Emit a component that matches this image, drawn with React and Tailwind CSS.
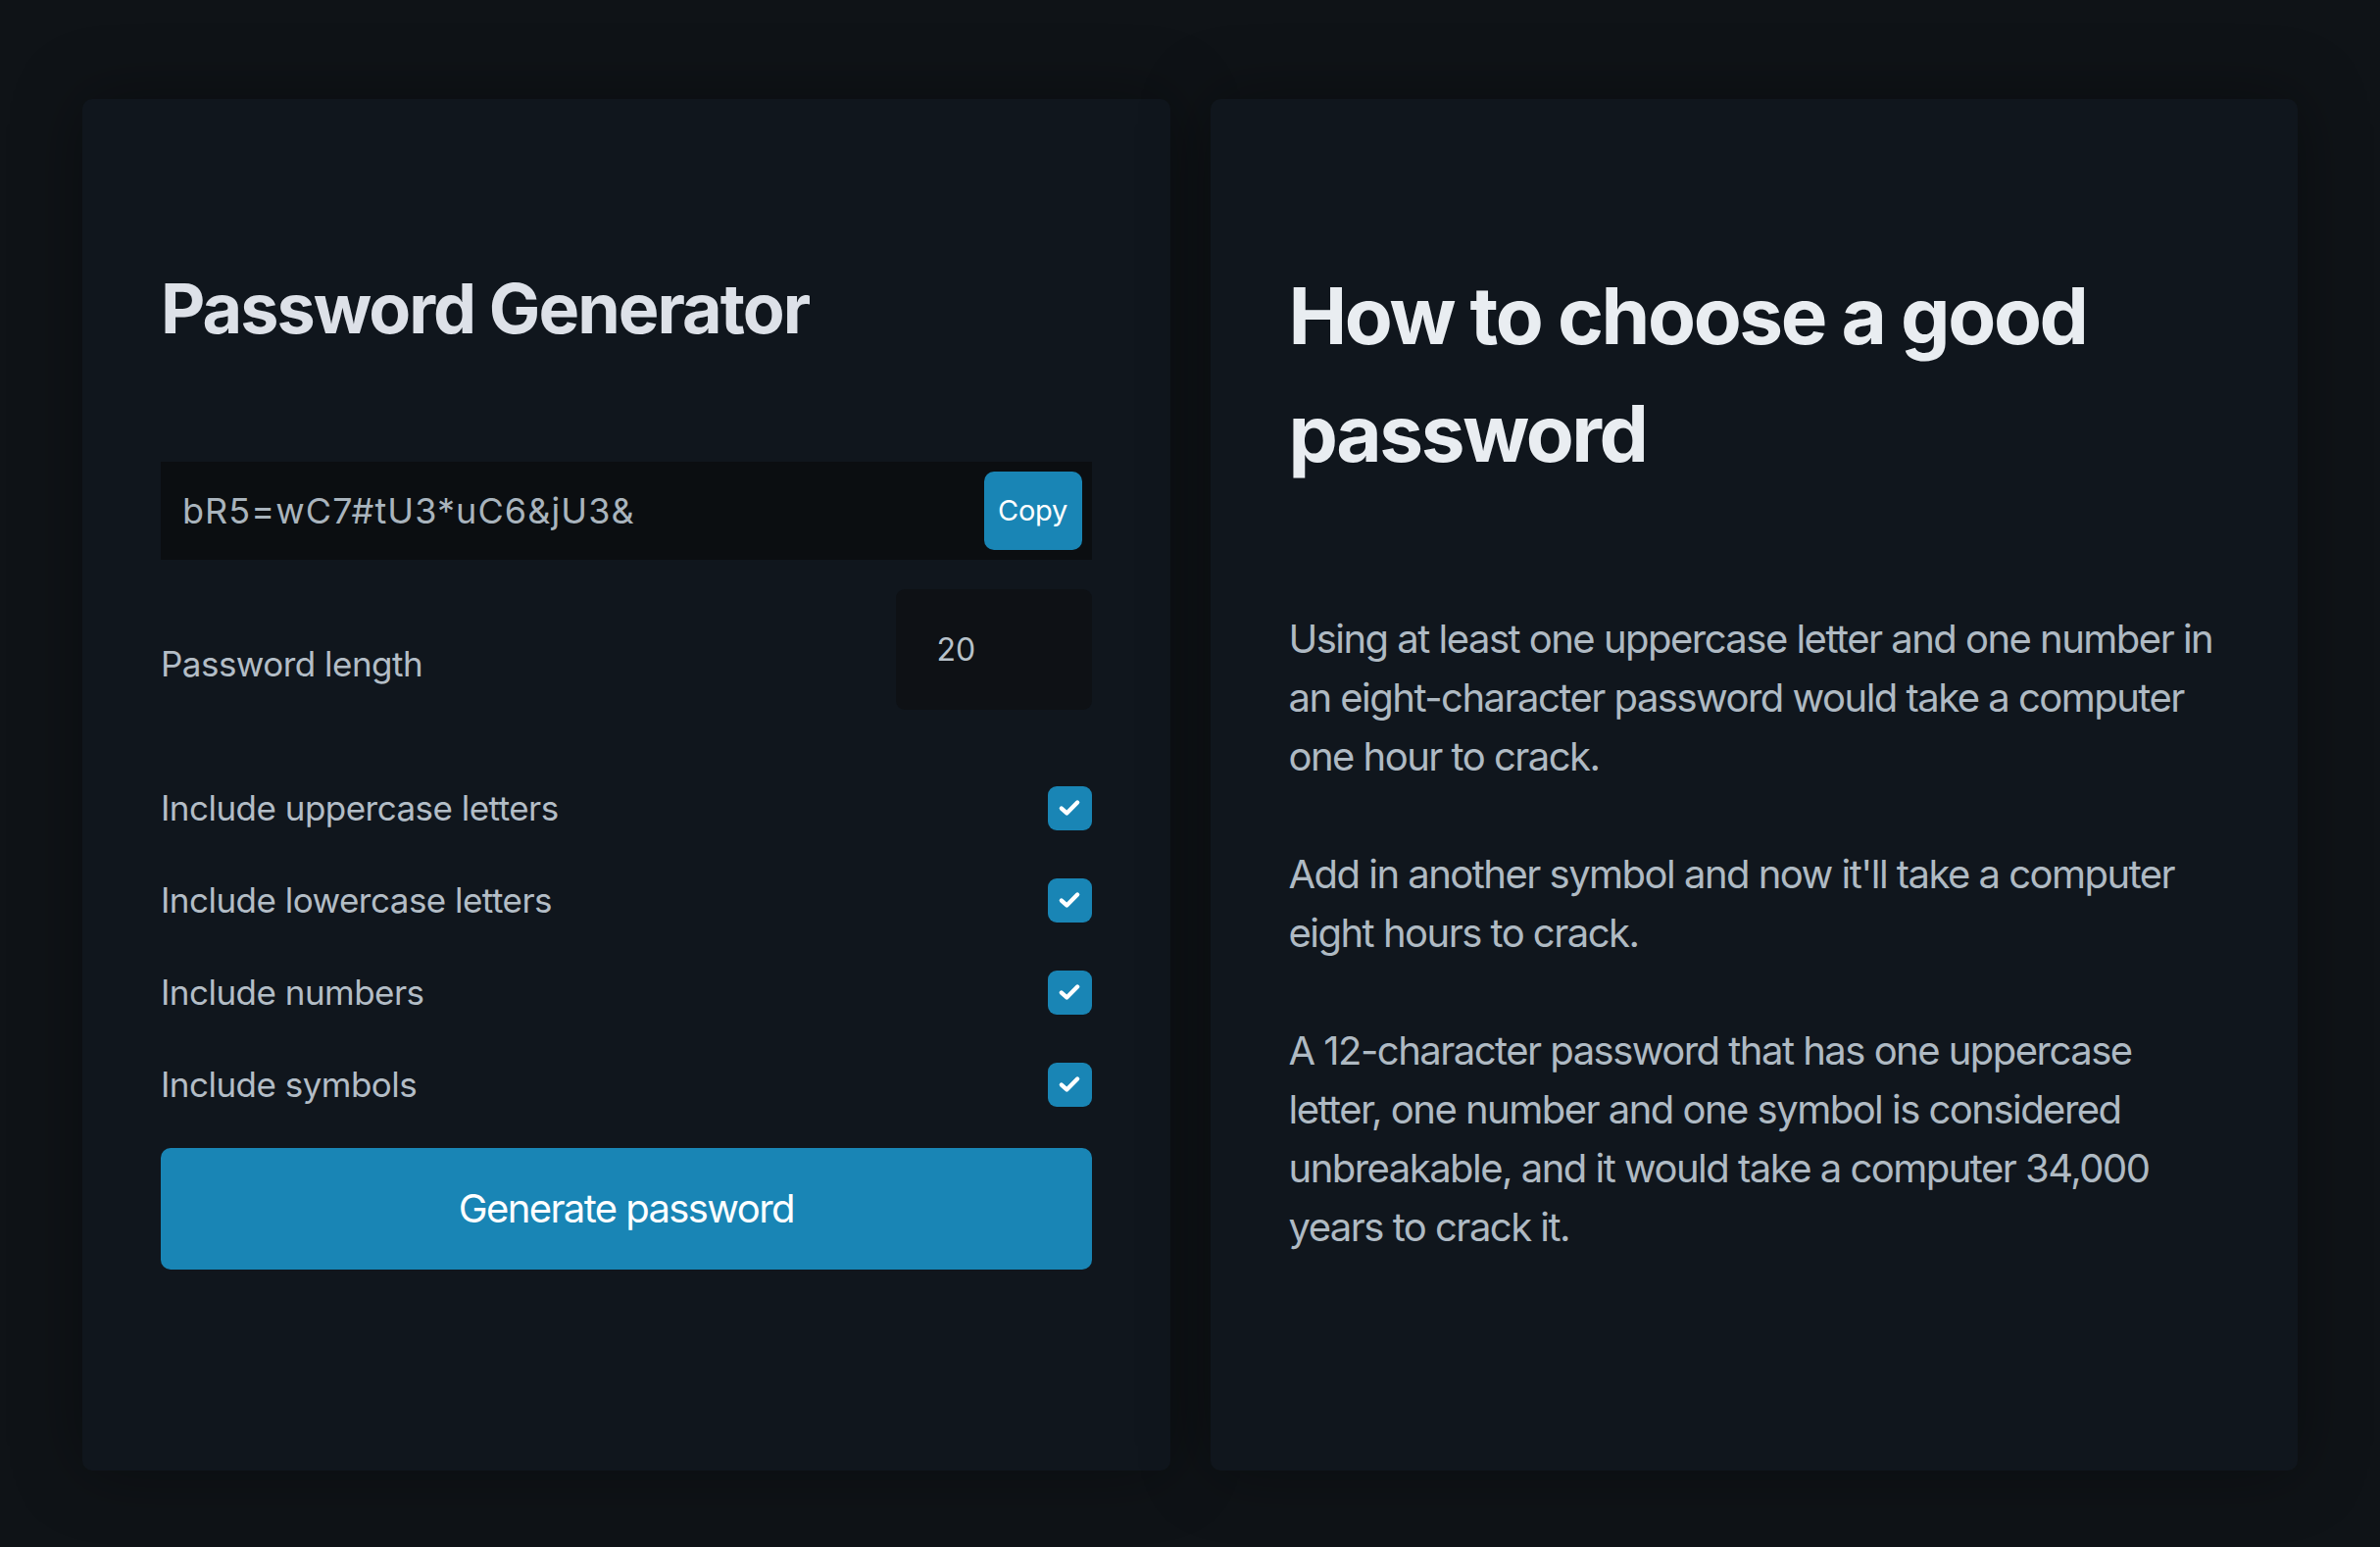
import { useState } from "react";

const font = { fontFamily: "Inter, 'Noto Sans', sans-serif" };

function CheckRow({ label, checked, onToggle }) {
  return (
    <div className="flex h-[94px] items-center justify-between">
      <span className="text-[35px] tracking-[-0.015em] text-[#b3bdc6]">{label}</span>
      <button
        type="button"
        onClick={onToggle}
        className={
          checked
            ? "flex h-[45px] w-[45px] items-center justify-center rounded-[9px] bg-[#1985b5]"
            : "flex h-[45px] w-[45px] items-center justify-center rounded-[9px] border-2 border-[#2c3a45] bg-[#0e1115]"
        }
      >
        {checked && (
          <svg width="26" height="26" viewBox="0 0 24 24" fill="none">
            <polyline
              points="4.5,12.5 9.5,17 19.5,7"
              stroke="#ffffff"
              strokeWidth="4"
              strokeLinecap="round"
              strokeLinejoin="round"
            />
          </svg>
        )}
      </button>
    </div>
  );
}

function App() {
  const [opts, setOpts] = useState({
    upper: true,
    lower: true,
    numbers: true,
    symbols: true,
  });
  const toggle = (k) => setOpts((prev) => ({ ...prev, [k]: !prev[k] }));

  return (
    <div
      className="min-h-[1578px] w-full bg-[#0f1317] px-[84px] pt-[101px] pb-[78px]"
      style={font}
    >
      <div className="grid grid-cols-2 gap-[41px]">
        {/* Generator */}
        <div className="h-[1399px] rounded-[10px] bg-[#10161d] px-[80px] pt-[174px] shadow-[0_0_70px_rgba(0,0,0,0.35)]">
          <h2 className="text-[70px] font-bold leading-[80px] tracking-[-0.028em] text-[#dde1e8]">
            Password Generator
          </h2>

          <div className="mt-[116px] flex h-[100px] items-center justify-between bg-[#0b0e11] pl-[22px] pr-[10px]">
            <span className="text-[36px] tracking-[0.03em] text-[#a9b4bd]">
              bR5=wC7#tU3*uC6&jU3&
            </span>
            <button
              type="button"
              className="h-[80px] w-[100px] rounded-[10px] bg-[#1985b5] text-[29px] tracking-[-0.01em] text-white"
            >
              Copy
            </button>
          </div>

          <div className="mt-[30px] flex items-start justify-between">
            <span className="mt-[50px] text-[35px] tracking-[-0.015em] text-[#b3bdc6]">
              Password length
            </span>
            <div className="flex h-[123px] w-[200px] items-center rounded-[9px] bg-[#0e1115] pl-[42px] text-[32px] text-[#b8c2ca]">
              20
            </div>
          </div>

          <div className="mt-[53px]">
            <CheckRow
              label="Include uppercase letters"
              checked={opts.upper}
              onToggle={() => toggle("upper")}
            />
            <CheckRow
              label="Include lowercase letters"
              checked={opts.lower}
              onToggle={() => toggle("lower")}
            />
            <CheckRow
              label="Include numbers"
              checked={opts.numbers}
              onToggle={() => toggle("numbers")}
            />
            <CheckRow
              label="Include symbols"
              checked={opts.symbols}
              onToggle={() => toggle("symbols")}
            />
          </div>

          <button
            type="button"
            className="mt-[18px] h-[124px] w-full rounded-[10px] bg-[#1985b5] text-[40px] tracking-[-0.04em] text-white"
          >
            Generate password
          </button>
        </div>

        {/* Tips */}
        <div className="h-[1399px] rounded-[10px] bg-[#10161d] px-[80px] pt-[161px] shadow-[0_0_70px_rgba(0,0,0,0.35)]">
          <h1 className="text-[80px] font-bold leading-[120px] tracking-[-0.03em] text-[#e9edf1]">
            How to choose a good
            <br />
            password
          </h1>

          <div className="mt-[120px] whitespace-nowrap text-[40px] leading-[60px] tracking-[-0.038em] text-[#afbac3]">
            <p className="mb-[60px]">
              Using at least one uppercase letter and one number in
              <br />
              an eight-character password would take a computer
              <br />
              one hour to crack.
            </p>
            <p className="mb-[60px]">
              Add in another symbol and now it'll take a computer
              <br />
              eight hours to crack.
            </p>
            <p>
              A 12-character password that has one uppercase
              <br />
              letter, one number and one symbol is considered
              <br />
              unbreakable, and it would take a computer 34,000
              <br />
              years to crack it.
            </p>
          </div>
        </div>
      </div>
    </div>
  );
}

export default App;
